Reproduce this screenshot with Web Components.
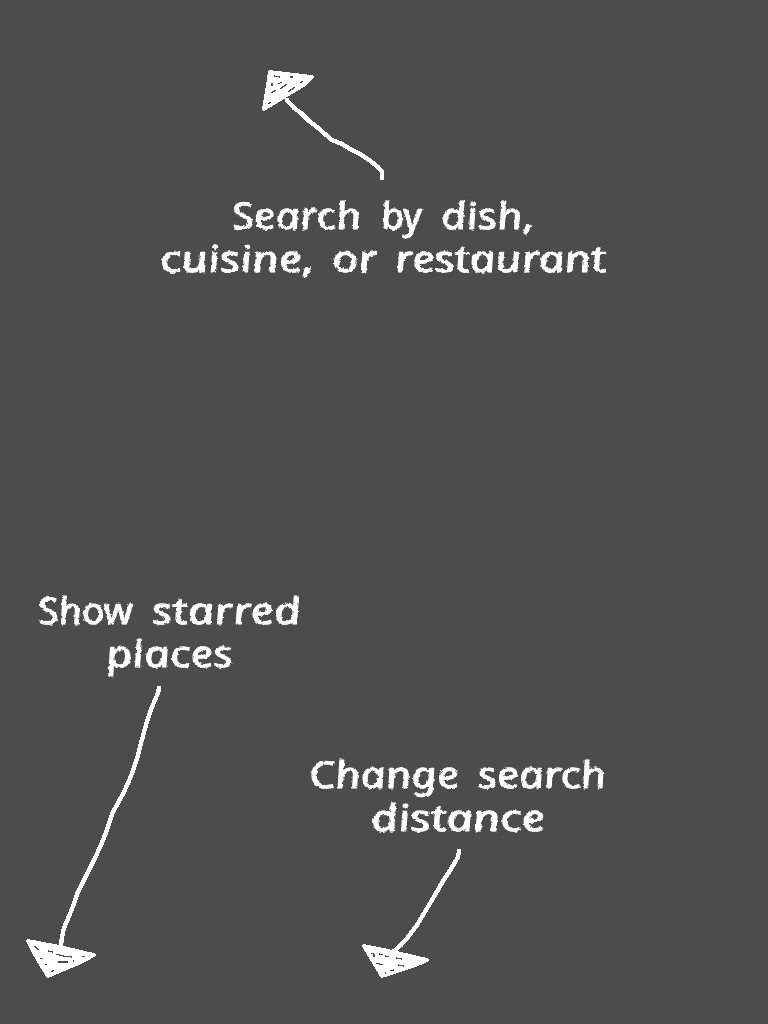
<!DOCTYPE html>
<html lang="en">
<head>
<meta charset="utf-8">
<title>Search tips</title>
<style>html,body{margin:0;background:#4c4c4c}</style>
</head>
<body>
<tips-overlay>
  <chalk-hint slot="top">
    <chalk-arrow slot="before" box="0 60 768 130"
      shaft="M287 100L294 108L301 113L309 121L317 127L326 135L332 140L342 144L350 149L360 154L369 160L378 167L382 172V178"
      head="M270 72L312 77L305 84L264 109Z"
      gaps="M274 76L280 77M290 77h3M272 83v3M278 84l4-2M271 93l5-3M280 89l7-5M288 92l7-5M300 83l3-2M268 104l3-2"></chalk-arrow>
    <chalk-line box="0 190 768 50" base="229" words="Search,233,361|by,382,422|dish&#44;,442,534"></chalk-line>
    <chalk-line box="0 240 768 50" base="272" words="cuisine&#44;,161,314|or,333,377|restaurant,396,606"></chalk-line>
  </chalk-hint>
  <chalk-hint slot="left">
    <chalk-line box="0 590 304 45" base="624" words="Show,39,133|starred,153,301"></chalk-line>
    <chalk-line box="0 635 304 50" base="667" words="places,107,233"></chalk-line>
    <chalk-arrow slot="after" box="0 685 304 300"
      shaft="M159 688L158 693L152 707L146 725L141 743L137 759L131 776L124 792L113 812L107 830L101 845L94 860L85 878L78 892L72 909L64 928L62 937L61 946"
      head="M28 941L60 947L94 955L81 962L48 976L38 960Z"
      gaps="M34 946l5 4M48 951l5 1M56 954l7 2 9 1M58 962h10M40 958l3 1M46 964v1M82 956l3 1M51 972l3-2M73 961h1"></chalk-arrow>
  </chalk-hint>
  <chalk-hint slot="right">
    <chalk-line box="304 755 464 45" base="788" words="Change,310,459|search,479,606"></chalk-line>
    <chalk-line box="304 800 464 45" base="831" words="distance,372,545"></chalk-line>
    <chalk-arrow slot="after" box="304 845 464 140"
      shaft="M459 851L458 857L451 869L443 881L435 895L426 910L417 925L408 937L401 945L394 951"
      head="M364 946L393 952L427 960L416 965L382 976L373 961Z"
      gaps="M371 953l3 1v3M379 954l4 1M385 956l4 1M396 958l6 1M376 963l7 2M398 965l6 1M390 971l4-1M385 973h1"></chalk-arrow>
  </chalk-hint>
</tips-overlay>

<script>
class TipsOverlay extends HTMLElement {
  constructor() {
    super();
    this.attachShadow({mode: 'open'}).innerHTML = `
      <style>
        :host{display:grid;grid-template-columns:304px 464px;grid-template-rows:590px 434px;width:768px;height:1024px;background:#4c4c4c;overflow:hidden}
        .top{grid-column:1 / 3;padding-top:60px}
        .right{padding-top:165px}
      </style>
      <div class="top"><slot name="top"></slot></div>
      <div class="left"><slot name="left"></slot></div>
      <div class="right"><slot name="right"></slot></div>`;
  }
}
customElements.define('tips-overlay', TipsOverlay);

class ChalkHint extends HTMLElement {
  constructor() {
    super();
    this.attachShadow({mode: 'open'}).innerHTML = `
      <style>:host{display:flex;flex-direction:column}</style>
      <slot name="before"></slot><slot></slot><slot name="after"></slot>`;
  }
}
customElements.define('chalk-hint', ChalkHint);

class ChalkLine extends HTMLElement {
  connectedCallback() {
    const box = this.getAttribute('box'), size = box.split(' ');
    // Each word carries its own left and right edge; the last two fields are numeric.
    const words = this.getAttribute('words').split('|').map(item => {
      const m = item.match(/^(.*),(\d+),(\d+)$/);
      return `<tspan x="${+m[2] + 1}" textLength="${m[3] - m[2] + 1}" lengthAdjust="spacingAndGlyphs">${m[1]}</tspan>`;
    }).join(' ');
    if (!this.shadowRoot) this.attachShadow({mode: 'open'});
    this.shadowRoot.innerHTML = `
      <style>
        :host{display:block}
        svg{display:block;overflow:visible}
        text{font:italic 400 37px "Noto Sans","Open Sans",sans-serif;fill:#fff;stroke:#fff;stroke-width:.9;stroke-linejoin:round}
      </style>
      <svg width="${size[2]}" height="${size[3]}" viewBox="${box}">
        <filter id="rough" x="-5%" y="-20%" width="110%" height="150%" color-interpolation-filters="sRGB">
          <feTurbulence type="fractalNoise" baseFrequency=".28" numOctaves="2" seed="4" result="n"/>
          <feDisplacementMap in="SourceGraphic" in2="n" scale="3.2" xChannelSelector="R" yChannelSelector="G"/>
        </filter>
        <g filter="url(#rough)"><text y="0" transform="translate(0 ${this.getAttribute('base')}) skewX(11)">${words}</text></g>
      </svg>`;
  }
}
customElements.define('chalk-line', ChalkLine);

class ChalkArrow extends HTMLElement {
  connectedCallback() {
    const a = n => this.getAttribute(n), size = a('box').split(' ');
    if (!this.shadowRoot) this.attachShadow({mode: 'open'});
    this.shadowRoot.innerHTML = `
      <style>
        :host{display:block}
        svg{display:block}
        path{fill:none;stroke:#fff;stroke-width:4.4;stroke-linecap:round;stroke-linejoin:round}
        .head{fill:#fff;stroke-width:3.8}
        .gaps{stroke:#4c4c4c;stroke-width:1.2;stroke-linecap:butt}
      </style>
      <svg width="${size[2]}" height="${size[3]}" viewBox="${a('box')}" shape-rendering="crispEdges" aria-hidden="true">
        <path d="${a('shaft')}"/><path class="head" d="${a('head')}"/><path class="gaps" d="${a('gaps')}"/>
      </svg>`;
  }
}
customElements.define('chalk-arrow', ChalkArrow);
</script>
</body>
</html>
